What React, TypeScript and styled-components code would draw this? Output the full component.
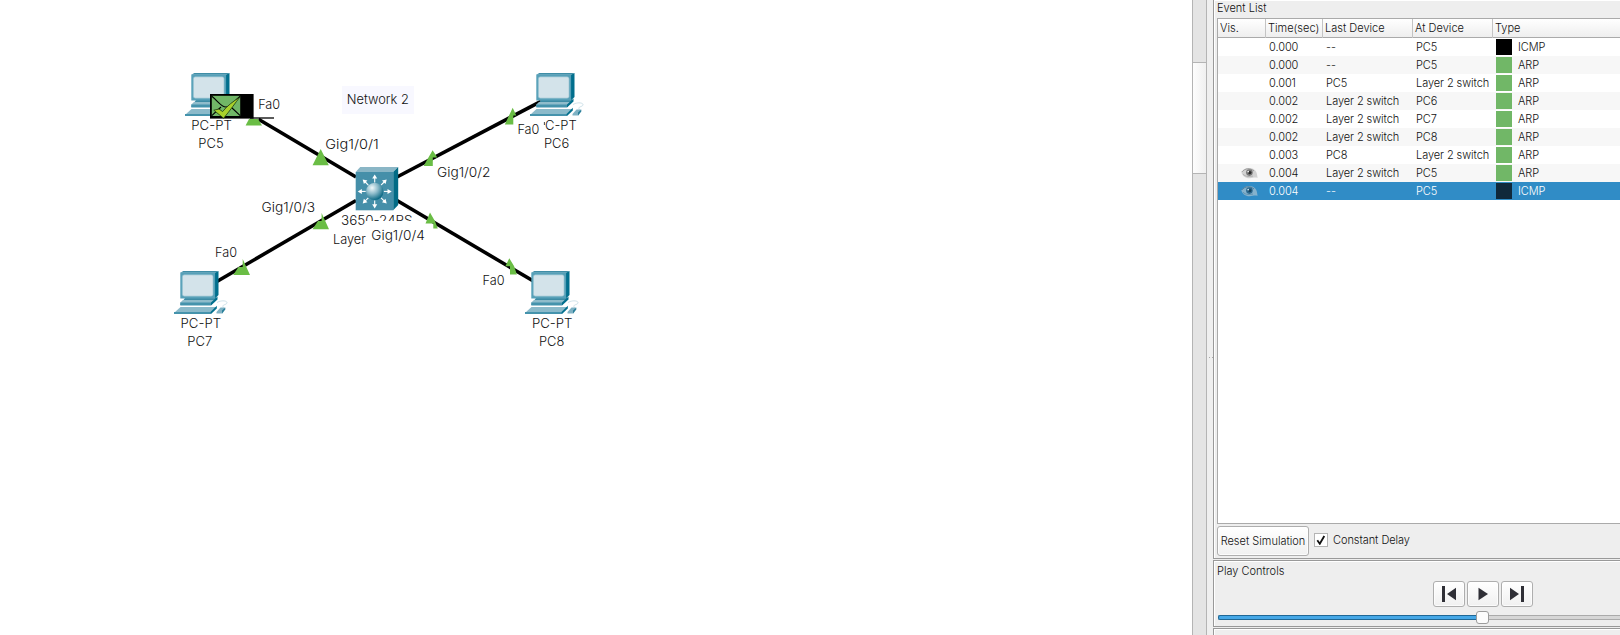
import React from 'react';
import styled, { createGlobalStyle } from 'styled-components';

const Global = createGlobalStyle`
  * { box-sizing: border-box; }
  html, body { margin: 0; background: #fff; overflow: hidden; }
  body { font-family: Inter, "Liberation Sans", sans-serif; font-weight: 300; color: #111; }
`;

const Page = styled.div`
  display: flex;
  width: 1620px;
  height: 635px;
  overflow: hidden;
`;

/* ---------- Topology canvas ---------- */

const Canvas = styled.svg`
  flex: 0 0 1192px;
  height: 635px;
  display: block;
`;

const Label = styled.text`
  font-size: 13px;
  fill: #111;
`;

type Pt = { x: number; y: number };

const Computer = ({ x, y }: Pt) => (
  <g transform={`translate(${x} ${y})`}>
    <path d="M43 31.5C47 29 53.5 29.5 53 32 52.5 34 47 33.5 49.5 36.5" fill="none" stroke="#c3dbe4" strokeWidth="0.8" />
    <path d="M11 27H39L43 27 37 34H6Z" fill="#3d8ba4" />
    <path d="M6.3 31.5 9 29H41L37 34H6.3Z" fill="#8fbccb" />
    <path d="M6.3 31.5H37V34.5H6.3Z" fill="#4593ac" />
    <path d="M37 34.5V31.5L43.5 25.5V28.5Z" fill="#016f8d" />
    <path d="M6.5 36H42.5L36.5 41.5H0.5Z" fill="#8bbaca" />
    <path d="M0 41H37V43H0Z" fill="#4593ac" />
    <path d="M36.5 41 42.8 34.8V37.5L37 43Z" fill="#016f8d" />
    <path d="M42.5 41 46.5 36.5H51L48 42.5H42.5Z" fill="#7fb2c4" />
    <path d="M48 39.5 51.3 36.5V38.5L48 42.7Z" fill="#2a7f9a" />
    <path d="M6.3 1.8 9.3 0H44.5L41 1.8Z" fill="#3f8da6" />
    <path d="M41 1.8 44.5 0V24L41 27.5Z" fill="#016f8d" />
    <rect x="6.3" y="1.5" width="34.8" height="26" fill="#56a0b8" />
    <rect x="8.3" y="3.8" width="30.8" height="21.4" rx="2" fill="#d3e3ea" stroke="#86b9ca" strokeWidth="0.6" />
  </g>
);

const Arrow = ({ angle, length }: { angle: number; length: number }) => (
  <g transform={`rotate(${angle})`}>
    <path d={`M9 0H${length - 3}`} stroke="#fff" strokeWidth="1.1" />
    <path d={`M${length} 0 ${length - 4.2}-2.5V2.5Z`} fill="#fff" />
  </g>
);

const Switch = ({ x, y }: Pt) => (
  <g transform={`translate(${x} ${y})`}>
    <path d="M0 5 4.5 0H42.5L37.5 5Z" fill="#8ab6c6" />
    <path d="M37.5 5 42.5 0V38L37.5 43.3Z" fill="#026b86" />
    <rect y="5" width="37.6" height="38.3" fill="#458fa9" />
    <g transform="translate(19 24.4)">
      {[0, 45, 90, 135, 180, 225, 270, 315].map((a) => (
        <Arrow key={a} angle={a} length={17} />
      ))}
      <circle r="8.7" fill="url(#ball)" />
    </g>
  </g>
);

const Packet = () => (
  <g>
    <path d="M250 118H274" stroke="#000" strokeWidth="1.3" />
    <rect x="210" y="94" width="43.6" height="24.6" fill="#000" />
    <rect x="211.8" y="95.8" width="28.4" height="20.2" fill="#71b767" />
    <path
      d="M211.8 96.3C218 101 221 107 226 107S234 101 240.2 96.3M211.8 115.7 221 107M240.2 115.7 231 107"
      fill="none"
      stroke="#000"
      strokeWidth="1.1"
    />
    <path
      d="M213.8 110.2 219 109 222.6 111.6C227 106 233.5 101 239.8 97.2 235.5 102.5 230.5 110 223.6 118.3Z"
      fill="#a9d12b"
      stroke="#1c3a10"
      strokeWidth="0.8"
    />
  </g>
);

const links = [
  'M258.5 119.2 356 177',
  'M397 177 541 101.3',
  'M216 282 356 200.5',
  'M397 200.5 535 282',
];

const lights = [
  'M249 119H258L262 125.6H245.6Z',
  'M320.7 149 328.8 165.2H312.6Z',
  'M432.6 150.3 437.3 157.5H432.8V166H423.6Z',
  'M512.7 107.7 516.3 115.5H513.3V124.5H504.8Z',
  'M242.7 259 250 275H233.2L238.5 267H242.7Z',
  'M321.6 213 329 229.2H312.5L318 221H321.6Z',
  'M430 212.5 435 221.3 437.8 228.5H433.3V223.5H425.5Z',
  'M509.3 258.2 514 266 516.9 274.4H510V266.3H505.4Z',
];

const names: [string, number, number, number][] = [
  ['PC-PT', 191.3, 130.4, 40.5],
  ['PC5', 198.3, 148.4, 25.3],
  ['C-PT', 545, 130.4, 31.7],
  ['PC6', 544, 148.4, 25.3],
  ['PC-PT', 180.6, 328.4, 40.5],
  ['PC7', 187.3, 346.4, 25],
  ['PC-PT', 532, 328.4, 40.5],
  ['PC8', 539, 346.4, 25.3],
  ['3650-24PS', 341, 225.4, 71.5],
  ['Layer', 333, 243.6, 32.8],
];

const ports: [string, number, number, number][] = [
  ['Fa0', 258.2, 108.5, 22],
  ['Fa0', 517.4, 134.2, 22],
  ['Fa0', 215, 257.3, 22],
  ['Fa0', 482.6, 284.5, 22],
  ['Gig1/0/1', 325.3, 148.6, 53.5],
  ['Gig1/0/2', 437, 176.6, 53.5],
  ['Gig1/0/3', 261.6, 211.6, 53.5],
  ['Gig1/0/4', 371.3, 239.6, 53.5],
];

const TextRun = ({ item: [text, x, y, w] }: { item: [string, number, number, number] }) => (
  <Label x={x} y={y} textLength={w} lengthAdjust="spacingAndGlyphs">
    {text}
  </Label>
);

const Topology = () => (
  <Canvas viewBox="0 0 1192 635">
    <defs>
      <radialGradient id="ball" cx="0.35" cy="0.3" r="0.75">
        <stop offset="0" stopColor="#f2f9fb" />
        <stop offset="0.45" stopColor="#8fbccb" />
        <stop offset="1" stopColor="#00627f" />
      </radialGradient>
    </defs>
    {links.map((d) => (
      <path key={d} d={d} stroke="#000" strokeWidth="3.6" />
    ))}
    <Computer x={185} y={73} />
    <Computer x={530} y={73} />
    <Computer x={174} y={271} />
    <Computer x={525} y={271} />
    <Switch x={355.7} y={167} />
    {names.map((n) => (
      <TextRun key={n[0] + n[1]} item={n} />
    ))}
    <path d="M544.4 122V125" stroke="#333" strokeWidth="0.9" />
    <rect x="366" y="221" width="62" height="22" fill="#fff" />
    {lights.map((d) => (
      <path key={d} d={d} fill="#6abd45" />
    ))}
    <rect x="342" y="86" width="72" height="28" fill="#f8f8ff" />
    <TextRun item={['Network 2', 346.8, 104.4, 62]} />
    {ports.map((n) => (
      <TextRun key={n[0] + n[1]} item={n} />
    ))}
    <Packet />
  </Canvas>
);

/* ---------- Scroll bar and splitter ---------- */

const ScrollTrack = styled.div`
  flex: 0 0 15px;
  background: #e4e4e4;
  border: solid #b4b4b4;
  border-width: 0 1px;
  padding-top: 62px;
`;

const ScrollThumb = styled.div`
  height: 112px;
  border: solid #b4b4b4;
  border-width: 1px 0;
  background: linear-gradient(90deg, #fdfdfd, #f0f0f0);
`;

const Splitter = styled.div`
  flex: 0 0 6px;
  display: flex;
  align-items: center;
  justify-content: flex-end;
  gap: 2px;
  padding-top: 80px;
  background: #efefef;
`;

const Grip = styled.i`
  width: 1px;
  height: 1px;
  background: #aaa;
`;

/* ---------- Simulation panel ---------- */

const Side = styled.aside`
  flex: 1;
  display: flex;
  flex-direction: column;
  background: #eee;
  font-size: 11px;
`;

const Group = styled.section<{ $height: number; $first?: boolean }>`
  flex: 0 0 ${(p) => p.$height}px;
  margin-bottom: 1px;
  border: solid #999;
  border-width: ${(p) => (p.$first ? '0 0 1px 1px' : '1px 0 1px 1px')};
  box-shadow: inset 1px 1px 0 #fff;
  padding-left: 3px;
  display: flex;
  flex-direction: column;
`;

const Title = styled.div<{ $height: number; $line: number }>`
  height: ${(p) => p.$height}px;
  line-height: ${(p) => p.$line}px;
`;

const Table = styled.div`
  height: 506px;
  background: #fff;
  border: solid #aaa;
  border-width: 1px 0 1px 1px;
`;

const columns = '48px 57px 90px 80px 1fr';

const Header = styled.div`
  display: grid;
  grid-template-columns: ${columns};
  height: 19px;
  line-height: 19px;
  border-bottom: 1px solid #aaa;
  background: linear-gradient(#fff, #eee);
`;

const HeadCell = styled.div`
  padding-left: 2px;
  border-right: 1px solid #c4c4c4;
  white-space: nowrap;
  &:last-child { border-right: 0; }
`;

const Row = styled.div<{ $alt: boolean; $selected: boolean }>`
  display: grid;
  grid-template-columns: ${columns};
  height: 18px;
  line-height: 18px;
  letter-spacing: -0.08px;
  color: ${(p) => (p.$selected ? '#fff' : 'inherit')};
  background: ${(p) => (p.$selected ? '#308cc6' : p.$alt ? '#f7f7f7' : '#fff')};
`;

const Cell = styled.div`
  display: flex;
  align-items: center;
  padding-left: 3px;
  white-space: nowrap;
`;

const VisCell = styled(Cell)`
  justify-content: flex-end;
  padding-right: 8px;
`;

const Swatch = styled.span<{ $color: string }>`
  width: 16px;
  height: 16px;
  margin-right: 6px;
  background: ${(p) => p.$color};
`;

const Eye = ({ tint }: { tint: boolean }) => (
  <svg width="17" height="12" viewBox="0 0 17 12">
    <path
      d="M0.3 5.5C2.5 1.5 7.5-.3 12 1.8 15 3.4 16.3 6 16.5 11 13.5 9.8 11 11.8 7 11.2 4 10.7 1.5 9 .3 5.5Z"
      fill={tint ? '#85b2cd' : '#d2d2d2'}
    />
    <path d="M0.8 5C3.8 1 9.5.8 13 4" fill="none" stroke={tint ? '#547f9a' : '#999'} strokeWidth="1" />
    <path d="M2 7.3C5 10 9 9.8 12 9" fill="none" stroke={tint ? '#5e8fac' : '#aaa'} strokeWidth="0.9" />
    <circle cx="8.4" cy="5.6" r="3.3" fill={tint ? '#2b698f' : '#777'} />
    <circle cx="8.8" cy="5.6" r="1.7" fill={tint ? '#16425e' : '#2b2b2b'} />
    <circle cx="7.2" cy="4.6" r="0.9" fill={tint ? '#c5e2f2' : '#eee'} />
  </svg>
);

const events: [string, string, string, string][] = [
  ['0.000', '--', 'PC5', 'ICMP'],
  ['0.000', '--', 'PC5', 'ARP'],
  ['0.001', 'PC5', 'Layer 2 switch', 'ARP'],
  ['0.002', 'Layer 2 switch', 'PC6', 'ARP'],
  ['0.002', 'Layer 2 switch', 'PC7', 'ARP'],
  ['0.002', 'Layer 2 switch', 'PC8', 'ARP'],
  ['0.003', 'PC8', 'Layer 2 switch', 'ARP'],
  ['0.004', 'Layer 2 switch', 'PC5', 'ARP'],
  ['0.004', '--', 'PC5', 'ICMP'],
];

const Options = styled.div`
  display: flex;
  padding-top: 2px;
`;

const Button = styled.button`
  border: 1px solid #aeaeae;
  border-radius: 3px;
  background: linear-gradient(#fff, #f0f0f0);
  box-shadow: inset 0 0 0 1px rgba(255, 255, 255, 0.7);
  font: inherit;
  color: inherit;
  padding: 0;
  white-space: nowrap;
`;

const ResetButton = styled(Button)`
  width: 92px;
  height: 30px;
`;

const Check = styled.label`
  display: flex;
  align-items: center;
  height: 28px;
  margin-left: 5px;
  gap: 5px;
  letter-spacing: -0.06px;
`;

const CheckBox = styled.span`
  width: 14px;
  height: 14px;
  border: 1px solid #b4b4b4;
  background: #fff;
  display: flex;
  align-items: center;
  justify-content: center;
`;

const PlayRow = styled.div`
  display: flex;
  gap: 2px;
  padding-left: 216px;
`;

const PlayButton = styled(Button)`
  width: 32px;
  height: 26px;
  display: flex;
  align-items: center;
  justify-content: center;
`;

const Slider = styled.div`
  display: flex;
  align-items: center;
  height: 14px;
  margin-top: 3px;
  padding-left: 1px;
`;

const Filled = styled.div`
  width: 258px;
  height: 5px;
  border: 1px solid #1f6795;
  border-right: 0;
  border-radius: 2px 0 0 2px;
  background: #45a7e6;
`;

const Knob = styled.div`
  width: 13px;
  height: 13px;
  border: 1px solid #9c9c9c;
  border-radius: 3px;
  background: #fcfcfc;
`;

const Empty = styled.div`
  flex: 1;
  height: 5px;
  border: solid #aaa;
  border-width: 1px 0;
  background: #d6d6d6;
`;

const ink = '#2f2f36';

const App = () => (
  <Page>
    <Global />
    <Topology />
    <ScrollTrack>
      <ScrollThumb />
    </ScrollTrack>
    <Splitter>
      <Grip />
      <Grip />
    </Splitter>
    <Side>
      <Group $height={559} $first>
        <Title $height={18} $line={17}>
          Event List
        </Title>
        <Table>
          <Header>
            {['Vis.', 'Time(sec)', 'Last Device', 'At Device', 'Type'].map((h) => (
              <HeadCell key={h}>{h}</HeadCell>
            ))}
          </Header>
          {events.map(([time, last, at, type], i) => {
            const selected = i === events.length - 1;
            return (
              <Row key={i} $alt={i % 2 === 1} $selected={selected}>
                <VisCell>{i > 6 && <Eye tint={selected} />}</VisCell>
                <Cell>{time}</Cell>
                <Cell>{last}</Cell>
                <Cell>{at}</Cell>
                <Cell>
                  <Swatch $color={type === 'ARP' ? '#71b767' : selected ? '#10293b' : '#000'} />
                  {type}
                </Cell>
              </Row>
            );
          })}
        </Table>
        <Options>
          <ResetButton>Reset Simulation</ResetButton>
          <Check>
            <CheckBox>
              <svg width="10" height="10" viewBox="0 0 10 10">
                <path d="M1.3 5.3 3.8 8.8 8.3 1" fill="none" stroke="#111" strokeWidth="1.8" />
              </svg>
            </CheckBox>
            Constant Delay
          </Check>
        </Options>
      </Group>
      <Group $height={67}>
        <Title $height={20} $line={21}>
          Play Controls
        </Title>
        <PlayRow>
          <PlayButton aria-label="Back">
            <svg width="16" height="18" viewBox="0 0 16 18">
              <path d="M1 1H4V17H1ZM15 2.7V15.3L6 9Z" fill={ink} />
            </svg>
          </PlayButton>
          <PlayButton aria-label="Play">
            <svg width="16" height="18" viewBox="0 0 16 18">
              <path d="M3.5 2.7V15.3L13 9Z" fill={ink} />
            </svg>
          </PlayButton>
          <PlayButton aria-label="Forward">
            <svg width="16" height="18" viewBox="0 0 16 18">
              <path d="M12 1H15V17H12ZM1 2.7V15.3L10 9Z" fill={ink} />
            </svg>
          </PlayButton>
        </PlayRow>
        <Slider>
          <Filled />
          <Knob />
          <Empty />
        </Slider>
      </Group>
      <Group $height={20} />
    </Side>
  </Page>
);

export default App;
